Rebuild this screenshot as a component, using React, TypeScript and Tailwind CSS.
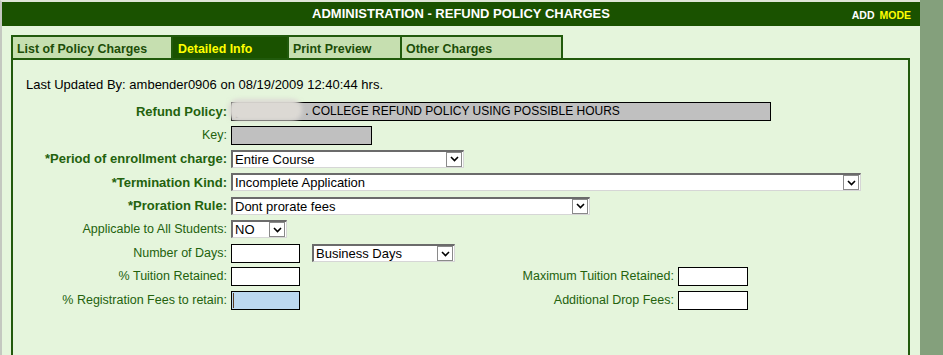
import React from "react";

const font = { fontFamily: '"Liberation Sans", Arial, sans-serif' };

function Chevron() {
  return (
    <svg width="9" height="6" viewBox="0 0 9 6">
      <path d="M1 1 L4.5 4.5 L8 1" fill="none" stroke="#000" strokeWidth="1.6" />
    </svg>
  );
}

function Select({ w, text }: { w: string; text: string }) {
  return (
    <div className={`${w} h-[18px] flex items-stretch bg-white border-t-2 border-l-2 border-[#6b6b6b] border-r border-b border-r-[#d6d6d6] border-b-[#d6d6d6]`}>
      <div className="flex-1 text-[13px] leading-[15px] pl-[2px] text-black whitespace-nowrap overflow-hidden">{text}</div>
      <div className="w-[16px] h-[15px] border border-[#8a8a8a] bg-white flex items-center justify-center mr-[1px]">
        <Chevron />
      </div>
    </div>
  );
}

function Input({ w, bg = "bg-white", children }: { w: string; bg?: string; children?: React.ReactNode }) {
  return (
    <div className={`${w} h-[19px] border border-black ${bg} text-[12px] leading-[17px] pl-[2px] text-black whitespace-nowrap relative`}>
      {children}
    </div>
  );
}

function Label({ children, bold = false }: { children: React.ReactNode; bold?: boolean }) {
  return (
    <div className={`w-[218px] shrink-0 text-right pr-[4px] text-[#23620d] whitespace-nowrap ${bold ? "font-bold text-[13px]" : "text-[12.5px]"}`}>
      {children}
    </div>
  );
}

export default function App() {
  return (
    <div className="w-[943px] h-[355px] overflow-hidden flex bg-[#84a07c]" style={font}>
      <div className="w-[920px] h-full flex flex-col border-l-2 border-l-[#c4c8c0] border-t-2 border-t-[#dfe6d8] bg-[#e5f5dc]">
        <div className="h-[24px] bg-[#1a5200] flex items-center relative">
          <div className="flex-1 text-center text-white font-bold text-[13px]">
            ADMINISTRATION - REFUND POLICY CHARGES
          </div>
          <div className="absolute right-[9px] top-[6px] text-[10.5px] font-bold flex gap-[5px]">
            <span className="text-white">ADD</span>
            <span className="text-[#ffff00]">MODE</span>
          </div>
        </div>
        <div className="pl-[9px] pt-[9px] flex-1 flex flex-col">
          <div className="flex h-[23px] text-[12.4px] font-bold">
            <div className="w-[162px] bg-[#c6dfb0] border-2 border-b-0 border-[#215a0c] text-[#1c4d08] pl-[4px] pt-[3px] whitespace-nowrap">List of Policy Charges</div>
            <div className="w-[114px] bg-[#1a5200] border-t-2 border-[#215a0c] text-[#ffff00] pl-[5px] pt-[3px] whitespace-nowrap">Detailed Info</div>
            <div className="w-[115px] bg-[#c6dfb0] border-2 border-b-0 border-[#215a0c] text-[#1c4d08] pl-[4px] pt-[3px] whitespace-nowrap">Print Preview</div>
            <div className="w-[161px] bg-[#c6dfb0] border-2 border-l-0 border-b-0 border-[#215a0c] text-[#1c4d08] pl-[4px] pt-[3px] whitespace-nowrap">Other Charges</div>
          </div>
          <div className="w-[899px] flex-1 border-2 border-[#215a0c] border-b-0 flex flex-col">
            <div className="pl-[13px] pt-[17px] text-[13px] leading-[15px] text-black h-[42px] whitespace-nowrap">
              Last Updated By: ambender0906 on 08/19/2009 12:40:44 hrs.
            </div>
            <div className="flex flex-col gap-[4.6px]">
              <div className="flex items-center h-[19px]">
                <Label bold>Refund Policy:</Label>
                <div className="relative">
                  <Input w="w-[540px]" bg="bg-[#c0c0c0]">
                    <span className="pl-[1px]">[</span>
                    <span className="pl-[67px]">. COLLEGE REFUND POLICY USING POSSIBLE HOURS</span>
                  </Input>
                  <div className="absolute left-[-3px] top-[-3px] w-[74px] h-[22px] rounded-[10px] bg-[#dcd9d4] blur-[2px]" />
                </div>
              </div>
              <div className="flex items-center h-[19px]">
                <Label>Key:</Label>
                <Input w="w-[141px]" bg="bg-[#c0c0c0]" />
              </div>
              <div className="flex items-center h-[19px]">
                <Label bold>*Period of enrollment charge:</Label>
                <Select w="w-[233px]" text="Entire Course" />
              </div>
              <div className="flex items-center h-[19px]">
                <Label bold>*Termination Kind:</Label>
                <Select w="w-[630px]" text="Incomplete Application" />
              </div>
              <div className="flex items-center h-[19px]">
                <Label bold>*Proration Rule:</Label>
                <Select w="w-[359px]" text="Dont prorate fees" />
              </div>
              <div className="flex items-center h-[19px]">
                <Label>Applicable to All Students:</Label>
                <Select w="w-[56px]" text="NO" />
              </div>
              <div className="flex items-center h-[19px]">
                <Label>Number of Days:</Label>
                <Input w="w-[69px]" />
                <div className="ml-[12px]">
                  <Select w="w-[143px]" text="Business Days" />
                </div>
              </div>
              <div className="flex items-center h-[19px]">
                <Label>% Tuition Retained:</Label>
                <Input w="w-[69px]" />
                <div className="w-[378px] text-right pr-[4px] text-[12.5px] text-[#23620d] whitespace-nowrap">Maximum Tuition Retained:</div>
                <Input w="w-[70px]" />
              </div>
              <div className="flex items-center h-[19px]">
                <Label>% Registration Fees to retain:</Label>
                <Input w="w-[69px]" bg="bg-[#bcd8f0]">
                  <span className="absolute left-[1px] top-[1px] w-[1px] h-[15px] bg-[#5a3a20]" />
                </Input>
                <div className="w-[378px] text-right pr-[4px] text-[12.5px] text-[#23620d] whitespace-nowrap">Additional Drop Fees:</div>
                <Input w="w-[70px]" />
              </div>
            </div>
          </div>
        </div>
      </div>
    </div>
  );
}
